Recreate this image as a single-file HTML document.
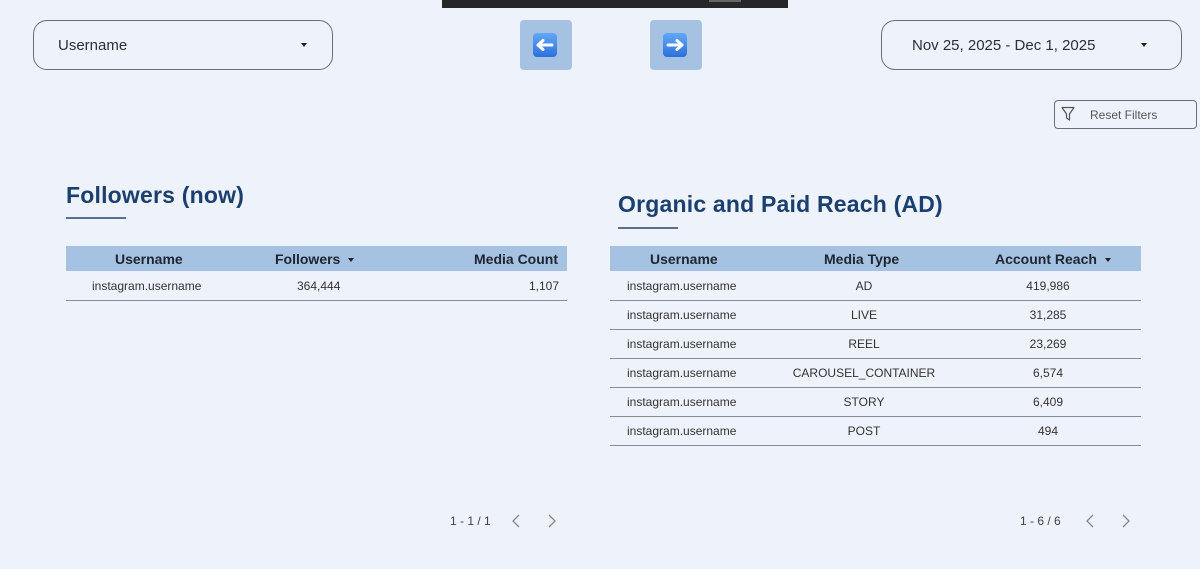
<!DOCTYPE html>
<html><head><meta charset="utf-8"><style>
*{margin:0;padding:0;box-sizing:border-box}
body{width:1200px;height:569px;background:#eef2fa;font-family:"Liberation Sans",sans-serif;position:relative;overflow:hidden;color:#333}
.abs{position:absolute}
.dd{position:absolute;border:1px solid #6b6f76;border-radius:14px;height:50px;top:20px;font-size:15px;color:#2b2f36;display:flex;align-items:center}
.car{position:absolute;width:0;height:0;border-left:3.5px solid transparent;border-right:3.5px solid transparent;border-top:4px solid #222}
.nav{position:absolute;top:20px;width:52px;height:50px;background:#a6c2e2;border-radius:4px}
.nav svg{position:absolute;left:13px;top:13px}
h2{position:absolute;color:#1b3f6e;font-size:23px;font-weight:bold;letter-spacing:.2px}
.ul{position:absolute;height:2px;width:60px;background:#58708e}
.hdr{position:absolute;height:25px;background:#a6c2e2;top:246px}
.th{position:absolute;font-size:14px;font-weight:bold;color:#1f2530;top:251px}
.td{position:absolute;font-size:12px;color:#333}
.line{position:absolute;height:1px;background:#8a8d92}
.pg{position:absolute;font-size:12px;color:#444;top:514px}
.chev{position:absolute;top:514px}
.arr{display:inline-block;border-left:3px solid transparent;border-right:3px solid transparent;border-top:4px solid #222;vertical-align:middle;margin-left:8px}
</style></head><body>
<div class="abs" style="left:442px;top:0;width:346px;height:8px;background:#262729"></div>
<div class="abs" style="left:709px;top:0;width:32px;height:2px;background:#666"></div>

<div class="dd" style="left:33px;width:300px;padding-left:24px">Username</div>
<div class="car" style="left:301px;top:43px"></div>
<div class="dd" style="left:881px;width:301px;padding-left:30px">Nov 25, 2025 - Dec 1, 2025</div>
<div class="car" style="left:1141px;top:43px"></div>

<div class="nav" style="left:520px"><svg width="24" height="24" viewBox="0 0 24 24"><defs><linearGradient id="g" x1="0" y1="0" x2="0" y2="1"><stop offset="0" stop-color="#62a8f7"/><stop offset="1" stop-color="#2d6fdc"/></linearGradient></defs><rect x="0" y="0" width="24" height="24" rx="4" fill="url(#g)"/><path d="M5 12H19M5 12L10 7.5M5 12L10 16.5" stroke="#fff" stroke-width="3" fill="none" stroke-linecap="round" stroke-linejoin="round"/></svg></div>
<div class="nav" style="left:650px"><svg width="24" height="24" viewBox="0 0 24 24"><rect x="0" y="0" width="24" height="24" rx="4" fill="url(#g)"/><path d="M5 12H19M19 12L14 7.5M19 12L14 16.5" stroke="#fff" stroke-width="3" fill="none" stroke-linecap="round" stroke-linejoin="round"/></svg></div>

<div class="abs" style="left:1054px;top:100px;width:143px;height:29px;border:1px solid #6b6f76;border-radius:4px;font-size:12px;color:#555;padding:7px 0 0 35px">Reset Filters</div>
<svg class="abs" style="left:1061px;top:106px" width="14" height="16" viewBox="0 0 14 16"><path d="M1 1.5H13L8.5 8V14L5.5 12V8Z" fill="none" stroke="#555" stroke-width="1.2" stroke-linejoin="round"/></svg>

<h2 style="left:66px;top:182px">Followers (now)</h2>
<div class="ul" style="left:66px;top:217px"></div>
<h2 style="left:618px;top:191px">Organic and Paid Reach (AD)</h2>
<div class="ul" style="left:618px;top:227px"></div>

<div class="hdr" style="left:66px;width:501px"></div>
<div class="th" style="left:115px">Username</div>
<div class="th" style="left:275px">Followers<span class="arr"></span></div>
<div class="th" style="left:474px">Media Count</div>
<div class="td" style="left:92px;top:279px">instagram.username</div>
<div class="td" style="left:297px;top:279px">364,444</div>
<div class="td" style="left:400px;top:279px;width:159px;text-align:right">1,107</div>
<div class="line" style="left:66px;width:501px;top:300px"></div>

<div class="hdr" style="left:610px;width:531px"></div>
<div class="th" style="left:650px">Username</div>
<div class="th" style="left:824px">Media Type</div>
<div class="th" style="left:995px">Account Reach<span class="arr"></span></div>

<div class="td" style="left:627px;top:279px">instagram.username</div><div class="td" style="left:764px;width:200px;text-align:center;top:279px">AD</div><div class="td" style="left:998px;width:100px;text-align:center;top:279px">419,986</div><div class="line" style="left:610px;width:531px;top:300px"></div>
<div class="td" style="left:627px;top:308px">instagram.username</div><div class="td" style="left:764px;width:200px;text-align:center;top:308px">LIVE</div><div class="td" style="left:998px;width:100px;text-align:center;top:308px">31,285</div><div class="line" style="left:610px;width:531px;top:329px"></div>
<div class="td" style="left:627px;top:337px">instagram.username</div><div class="td" style="left:764px;width:200px;text-align:center;top:337px">REEL</div><div class="td" style="left:998px;width:100px;text-align:center;top:337px">23,269</div><div class="line" style="left:610px;width:531px;top:358px"></div>
<div class="td" style="left:627px;top:366px">instagram.username</div><div class="td" style="left:764px;width:200px;text-align:center;top:366px">CAROUSEL_CONTAINER</div><div class="td" style="left:998px;width:100px;text-align:center;top:366px">6,574</div><div class="line" style="left:610px;width:531px;top:387px"></div>
<div class="td" style="left:627px;top:395px">instagram.username</div><div class="td" style="left:764px;width:200px;text-align:center;top:395px">STORY</div><div class="td" style="left:998px;width:100px;text-align:center;top:395px">6,409</div><div class="line" style="left:610px;width:531px;top:416px"></div>
<div class="td" style="left:627px;top:424px">instagram.username</div><div class="td" style="left:764px;width:200px;text-align:center;top:424px">POST</div><div class="td" style="left:998px;width:100px;text-align:center;top:424px">494</div><div class="line" style="left:610px;width:531px;top:445px"></div>

<div class="pg" style="left:450px">1 - 1 / 1</div>
<svg class="chev" style="left:511px" width="10" height="14"><path d="M8 1L2 7L8 13" stroke="#888" stroke-width="1.3" fill="none"/></svg>
<svg class="chev" style="left:547px" width="10" height="14"><path d="M2 1L8 7L2 13" stroke="#888" stroke-width="1.3" fill="none"/></svg>
<div class="pg" style="left:1020px">1 - 6 / 6</div>
<svg class="chev" style="left:1085px" width="10" height="14"><path d="M8 1L2 7L8 13" stroke="#888" stroke-width="1.3" fill="none"/></svg>
<svg class="chev" style="left:1121px" width="10" height="14"><path d="M2 1L8 7L2 13" stroke="#888" stroke-width="1.3" fill="none"/></svg>
</body></html>
